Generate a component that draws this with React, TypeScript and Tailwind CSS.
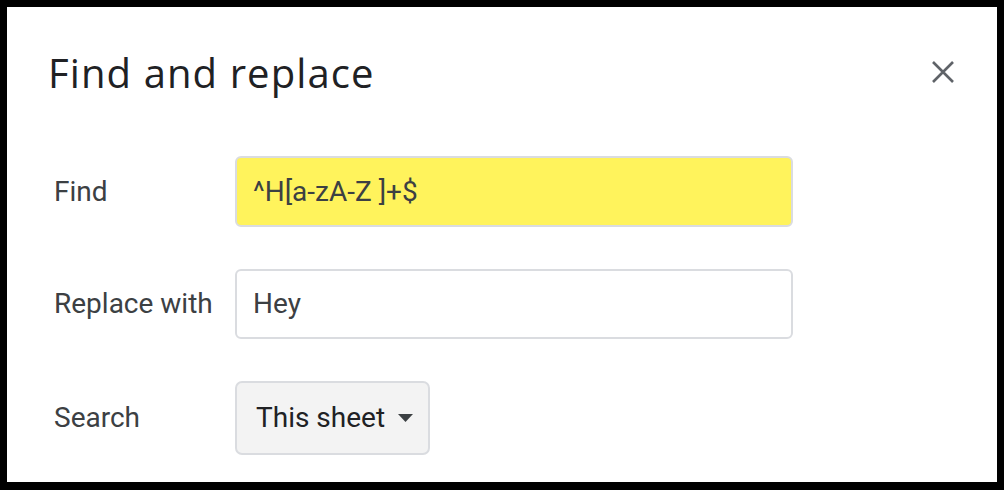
import React from "react";

export default function App() {
  return (
    <div className="w-[1004px] h-[490px] bg-black pt-[7px] px-[7px] pb-[8px]">
      <div className="bg-white h-full flex flex-col">
        <div className="flex items-start justify-between pl-[41px] pr-[43px] mt-[39px] h-[48px]">
          <h1 className="mt-[3px] text-[40px] leading-[48px] text-[#202124] font-['Open_Sans',sans-serif] font-normal tracking-[1.1px]">
            Find and replace
          </h1>
          <svg width="22" height="22" viewBox="0 0 22 22" className="mt-[15px]">
            <path d="M1 1L21 21M21 1L1 21" stroke="#5f6368" strokeWidth="2.6" />
          </svg>
        </div>
        <div className="mt-[62px] pl-[47px] grid grid-cols-[181px_558px] gap-y-[42px] items-center font-['Roboto',sans-serif] text-[28px]">
          <div className="text-[#3c4043]">Find</div>
          <div className="h-[71px] rounded-[6px] border-2 border-[#dadce0] bg-[#fff35c] flex items-center pl-[16px] text-[#3c4043]">
            ^H[a-zA-Z ]+$
          </div>
          <div className="text-[#3c4043]">Replace with</div>
          <div className="h-[70px] rounded-[6px] border-2 border-[#dadce0] bg-white flex items-center pl-[16px] text-[#3c4043]">
            Hey
          </div>
          <div className="text-[#3c4043]">Search</div>
          <div>
            <div className="inline-flex h-[74px] w-[195px] rounded-[7px] border-2 border-[#dadce0] bg-[#f3f3f3] items-center pl-[19px] text-[#202124]">
              <span>This sheet</span>
              <svg width="15" height="8" viewBox="0 0 15 8" className="ml-[13px]">
                <path d="M0 0H15L7.5 8Z" fill="#3c4043" />
              </svg>
            </div>
          </div>
        </div>
      </div>
    </div>
  );
}
